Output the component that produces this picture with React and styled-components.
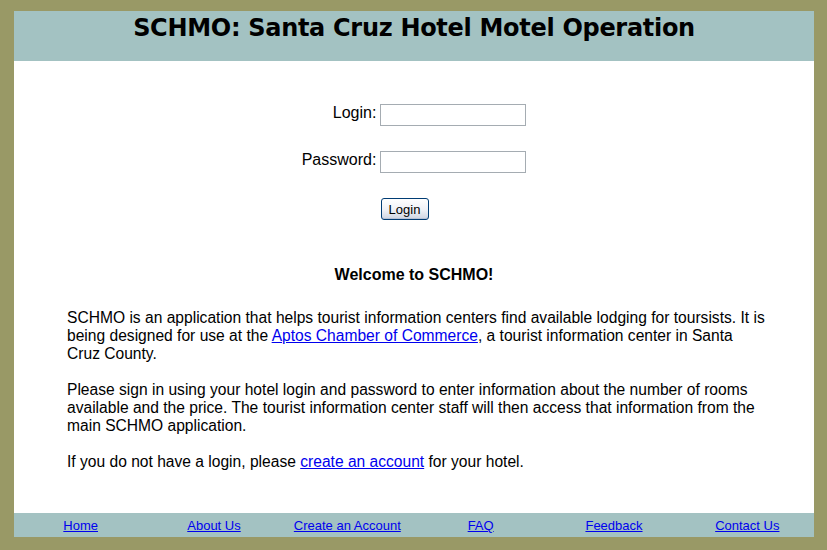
import styled, { createGlobalStyle } from "styled-components";

const GlobalStyle = createGlobalStyle`
  html, body {
    margin: 0;
    padding: 0;
    background: #999966;
  }
  body {
    font-family: "Liberation Sans", Arial, sans-serif;
    color: #000;
  }
`;

const Frame = styled.div`
  padding: 11px 13px 13px 14px;
`;

const Header = styled.header`
  background: #a3c2c2;
  height: 50px;
  display: flex;
  justify-content: center;
  padding-top: 3px;
  box-sizing: border-box;

  h1 {
    margin: 0;
    font-family: "DejaVu Sans", Tahoma, sans-serif;
    font-weight: bold;
    font-size: 24px;
    line-height: 28px;
    letter-spacing: -0.3px;
  }
`;

const Main = styled.main`
  background: #fff;
  padding: 43px 47px 24px 53px;
  font-size: 15.6px;
  line-height: 18px;
`;

const LoginForm = styled.form`
  display: flex;
  flex-direction: column;
  align-items: center;
  font-size: 16px;
  margin-right: 6px;
`;

const FormTable = styled.div`
  display: grid;
  grid-template-columns: auto auto;
  column-gap: 4px;
  row-gap: 25px;
  align-items: center;
`;

const Label = styled.label`
  text-align: right;
  padding-bottom: 4px;
`;

const TextInput = styled.input`
  width: 146px;
  height: 22px;
  box-sizing: border-box;
  border: 1px solid #a5acb2;
  margin: 0;
  padding: 1px 3px;
  font: 13px "Liberation Sans", Arial, sans-serif;
`;

const Button = styled.button`
  margin: 25px 0 0 -19px;
  width: 48px;
  height: 22px;
  box-sizing: border-box;
  border: 1px solid #003c74;
  border-radius: 3px;
  background: linear-gradient(#ffffff, #eef0f6 55%, #cfd5e2);
  font: 13px "Liberation Sans", Arial, sans-serif;
  color: #000;
  padding: 0;
  box-shadow: inset 0 -1px 0 #b9c2d6;
`;

const Welcome = styled.h2`
  margin: 46px 6px 25px 0;
  text-align: center;
  font-size: 16px;
  line-height: 18px;
  font-weight: bold;
`;

const Paragraph = styled.p`
  margin: 0 0 18px;
`;

const Link = styled.a`
  color: #0000ee;
  text-decoration: underline;
`;

const Footer = styled.footer`
  background: #a3c2c2;
  height: 24px;
  display: grid;
  grid-template-columns: repeat(6, 1fr);
  align-items: center;
  font-size: 13px;
`;

const FooterLink = styled.a`
  justify-self: center;
  color: #0000ee;
  text-decoration: underline;
  padding-top: 1px;
`;

const footerLinks = [
  "Home",
  "About Us",
  "Create an Account",
  "FAQ",
  "Feedback",
  "Contact Us",
];

export default function App() {
  return (
    <>
      <GlobalStyle />
      <Frame>
        <Header>
          <h1>SCHMO: Santa Cruz Hotel Motel Operation</h1>
        </Header>
        <Main>
          <LoginForm onSubmit={(e) => e.preventDefault()}>
            <FormTable>
              <Label htmlFor="login">Login:</Label>
              <TextInput id="login" type="text" />
              <Label htmlFor="password">Password:</Label>
              <TextInput id="password" type="password" />
            </FormTable>
            <Button type="submit">Login</Button>
          </LoginForm>
          <Welcome>Welcome to SCHMO!</Welcome>
          <Paragraph>
            SCHMO is an application that helps tourist information centers find
            available lodging for toursists. It is being designed for use at the{" "}
            <Link href="#">Aptos Chamber of Commerce</Link>, a tourist
            information center in Santa Cruz County.
          </Paragraph>
          <Paragraph>
            Please sign in using your hotel login and password to enter
            information about the number of rooms available and the price. The
            tourist information center staff will then access that information
            from the main SCHMO application.
          </Paragraph>
          <Paragraph>
            If you do not have a login, please{" "}
            <Link href="#">create an account</Link> for your hotel.
          </Paragraph>
        </Main>
        <Footer>
          {footerLinks.map((label) => (
            <FooterLink key={label} href="#">
              {label}
            </FooterLink>
          ))}
        </Footer>
      </Frame>
    </>
  );
}
